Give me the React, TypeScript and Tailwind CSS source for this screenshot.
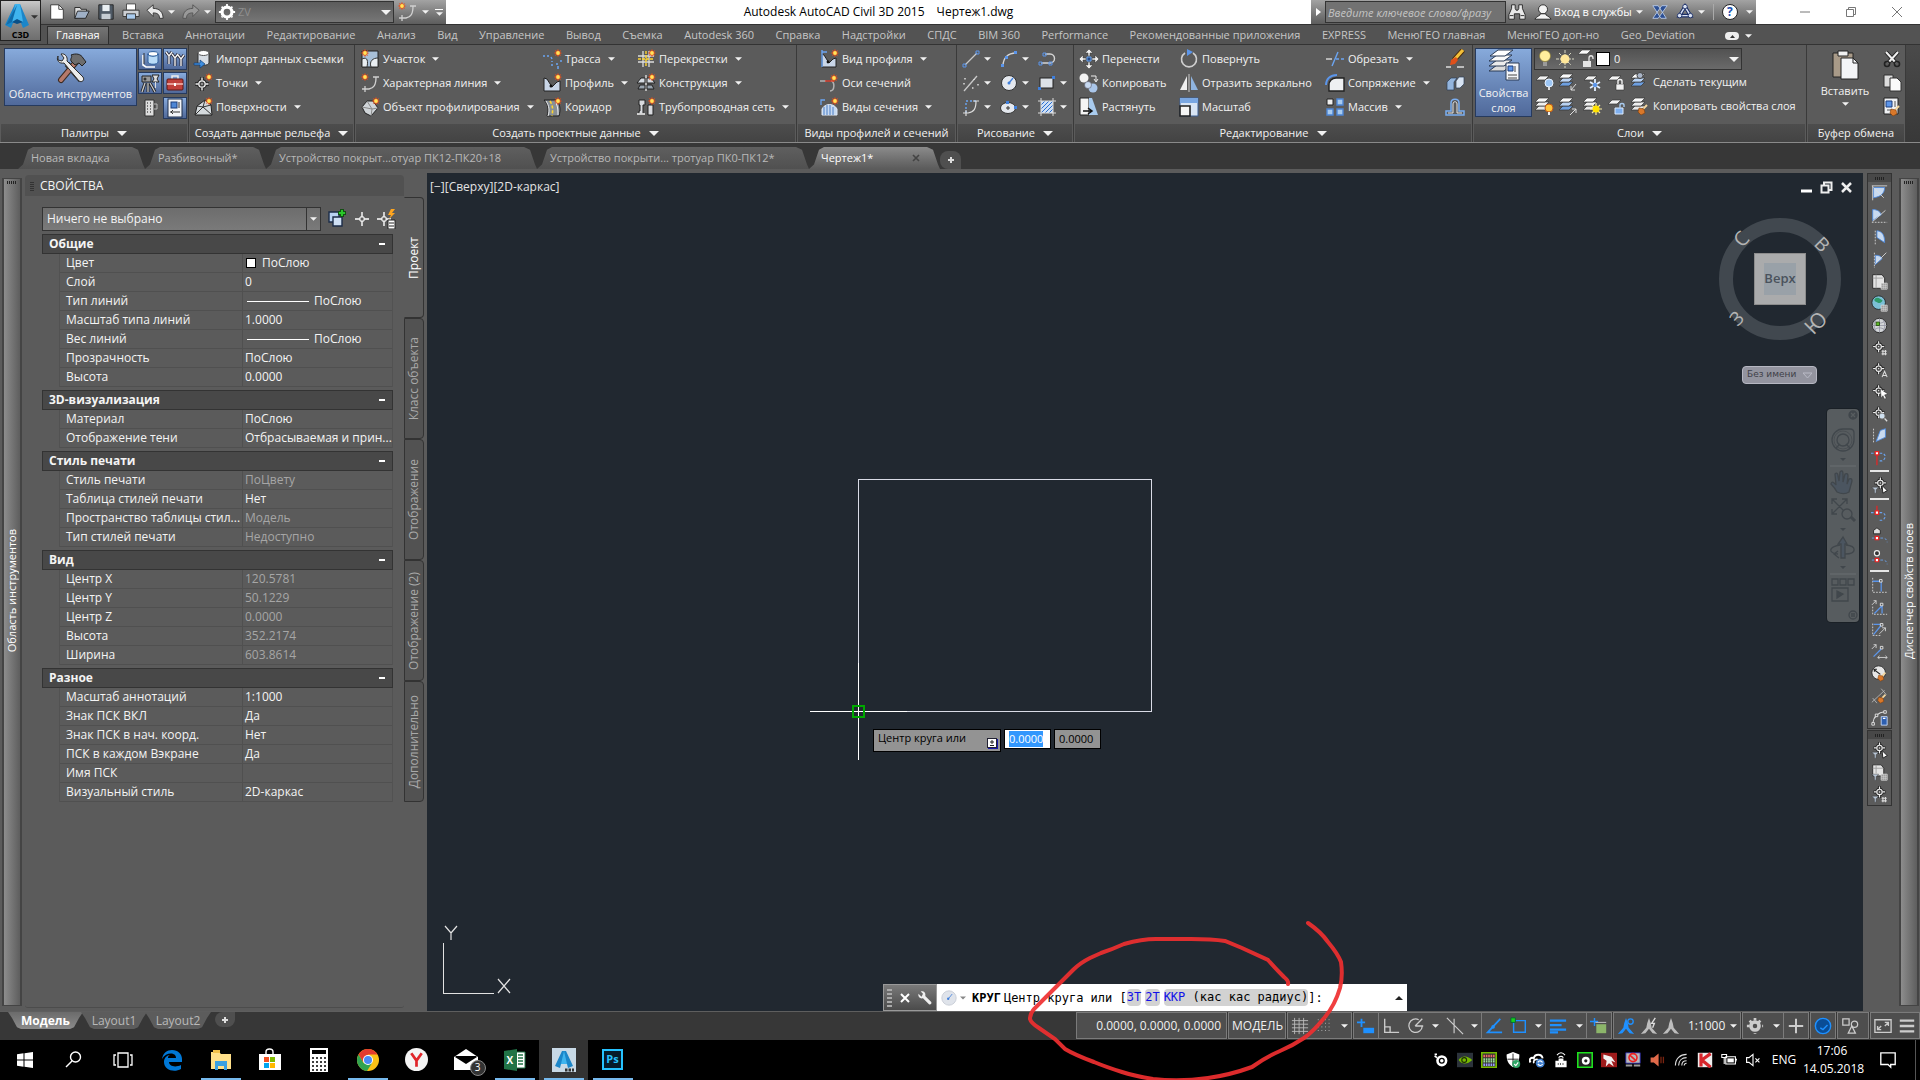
import type { ReactNode } from 'react';

type Kids = { children?: ReactNode };

function Svg({ s = 20, vb = 20, children }: Kids & { s?: number; vb?: number }) {
  return (
    <svg width={s} height={s} viewBox={`0 0 ${vb} ${vb}`} fill="none" className="shrink-0" aria-hidden="true">
      {children}
    </svg>
  );
}

function Caret({ big = false }: { big?: boolean }) {
  return (
    <svg width={big ? 10 : 7} height={big ? 5 : 4} viewBox="0 0 8 4" className="shrink-0" aria-hidden="true">
      <path d="M0 0h8L4 4z" fill="#f2f2f2" />
    </svg>
  );
}

// yellow/red burst that marks every "create" command
function Burst({ x = 16, y = 4 }: { x?: number; y?: number }) {
  return (
    <g transform={`translate(${x} ${y})`}>
      <path d="M0-4.2 1-1.8 3.2-3 2-.8 4.2 0 2 1 3.2 3 1 2 0 4.2-1 2-3.2 3-2 1-4.2 0-2-1-3.2-3-1-2z" fill="#e8501a" />
      <circle r="1.9" fill="#ffe45c" />
    </g>
  );
}

function Target({ x = 10, y = 10, c = '#f0f0f0' }: { x?: number; y?: number; c?: string }) {
  return (
    <g transform={`translate(${x} ${y})`}>
      <path d="M0-7v14M-7 0h14" stroke="#222" strokeWidth="3.4" />
      <circle r="3.6" fill="#3a3a3a" stroke="#222" strokeWidth="3" />
      <path d="M0-6.5v3M0 3.5v3M-6.5 0h3M3.5 0h3" stroke={c} strokeWidth="1.4" />
      <circle r="3.2" fill="#444" stroke={c} strokeWidth="1.3" />
      <circle r=".8" fill={c} />
    </g>
  );
}

function Layers({ blue = false }: { blue?: boolean }) {
  return (
    <g stroke="#333" strokeWidth=".7">
      <path d="M5 10h10l-4 4H1z" fill={blue ? '#6d9fe0' : '#e8e8e8'} />
      <path d="M5 6h10l-4 4H1z" fill={blue ? '#b9d2f2' : '#efefef'} />
      <path d="M5 2h10l-4 4H1z" fill="#fafafa" />
    </g>
  );
}

function Sheet() {
  return <path d="M6 4h9l-4 4H2z" fill="#f2f2f2" stroke="#333" strokeWidth=".7" />;
}

function Brush() {
  return (
    <g>
      <path d="m17 9-4 4" stroke="#f4d7a0" strokeWidth="2" />
      <path d="m9 12 5 1 1 4-4 2-3-3z" fill="#d9782a" stroke="#7a3d0c" strokeWidth=".6" />
    </g>
  );
}

/* ---------- ribbon pictures ---------- */

const ic = {
  tools: (
    <Svg s={34} vb={34}>
      <path d="m13 13 14 16" stroke="#2b2b2b" strokeWidth="6" />
      <path d="m22 11-15 18" stroke="#3a2a22" strokeWidth="6" strokeLinecap="round" />
      <path d="m22 11-15 18" stroke="#b5796a" strokeWidth="4" strokeLinecap="round" />
      <path d="M17 4c5-2 10-1 12 3l3 4-4 4-3-3-4 2-4-4c-1-3 2-4 0-6z" fill="#6d6d6d" stroke="#222" />
      <path d="M4 5c-2 4 1 8 6 7l15 18c3 2 6-1 4-4L13 10c1-4-2-8-6-7l3 4-2 3-4-1z" fill="#ececec" stroke="#2b2b2b" />
    </Svg>
  ),
  toolspace: (
    <Svg>
      <ellipse cx="13" cy="5" rx="5" ry="2.4" fill="#fff" stroke="#2c5d9b" />
      <path d="M8 5v8c0 3 10 3 10 0V5c0 3-10 3-10 0z" fill="#b9dbf7" stroke="#2c5d9b" />
      <path d="M3 6v10l3 2h9" stroke="#fff" strokeWidth="1.6" />
      <path d="M4 4v11" stroke="#333" strokeWidth="1" />
    </Svg>
  ),
  survey: (
    <Svg>
      <path d="m1 3 3 4v8M7 3 4 7M7 5l3 4v8m3-12-3 4m3-3 3 4v7m3-11-3 4" stroke="#223" strokeWidth="3" />
      <path d="m1 3 3 4v8M7 3 4 7M7 5l3 4v8m3-12-3 4m3-3 3 4v7m3-11-3 4" stroke="#f2f2f2" strokeWidth="1.4" />
    </Svg>
  ),
  tripod: (
    <Svg>
      <path d="M5 10 2 19M8 10v9M10 10l5 9" stroke="#222" strokeWidth="3" />
      <path d="M5 10 2 19M8 10v9M10 10l5 9" stroke="#c9c9c9" strokeWidth="1.300" />
      <path d="M2 3h9v6H2z" fill="#9a9a9a" stroke="#222" />
      <circle cx="5" cy="6" r="1.500" fill="#333" />
      <path d="M12 2h7l-2 4 2 3h-7l2-3z" fill="#ddd" stroke="#222" />
      <path d="M15.500 9v6" stroke="#ddd" />
    </Svg>
  ),
  toolbox: (
    <Svg>
      <path d="M7 6V3h6v3" stroke="#eee" strokeWidth="1.5" />
      <rect x="2" y="6" width="16" height="11" rx="1" fill="#c0403b" stroke="#5b1614" />
      <path d="M2 11h16" stroke="#f1b5b0" strokeWidth="1.6" />
      <path d="M9 10h2v3H9z" fill="#fff" />
    </Svg>
  ),
  building: (
    <Svg>
      <path d="M5 2h9v16H5z" fill="#ddd" stroke="#333" />
      <path d="M7 5h1m2 0h1M7 8h1m2 0h1M7 11h1m2 0h1M7 14h1m2 0h1" stroke="#555" strokeWidth="1.6" />
      <path d="M14 6h3v5h-3" stroke="#bbb" />
    </Svg>
  ),
  propPal: (
    <Svg>
      <rect x="3" y="1" width="14" height="18" fill="#f2f4f8" stroke="#1c2c48" />
      <rect x="6" y="4" width="6" height="6" fill="#4d86d6" stroke="#1c3c7a" />
      <path d="M14 4v6M5 14h10M8 12l-2 2 2 2" stroke="#333" />
    </Svg>
  ),
  importData: (
    <Svg>
      <path d="M5 4v10c0 3 11 3 11 0V4z" fill="#d7dde4" stroke="#333" />
      <ellipse cx="10.500" cy="4" rx="5.500" ry="2.500" fill="#fff" stroke="#555" />
      <path d="M1 14h6v-3l5 4-5 4v-3H1z" fill="#3f8fe0" stroke="#123e73" strokeWidth=".7" />
    </Svg>
  ),
  points: <Svg><Target x={9} y={11} /><Burst /></Svg>,
  surfaces: (
    <Svg>
      <path d="m2 18 2-9 8-6 6 5 1 10z" fill="#d4d9dc" stroke="#222" />
      <path d="m2 18 8-8 9 8M10 10 4 9m6 1 2-7m-2 7 8-2" stroke="#333" />
      <Burst />
    </Svg>
  ),
  parcel: (
    <Svg>
      <path d="M2 2h16v16H2z" fill="#a7bfd8" stroke="#222" />
      <path d="M2 10c6-3 6 3 5 8H2zM11 18c-2-6 2-9 7-9v9z" fill="#e9eef2" stroke="#333" />
      <Burst x={5} y={4} />
    </Svg>
  ),
  featureLine: (
    <Svg>
      <path d="M2 16h7c5-1 7-4 7-12M5 13v6M13 4h6" stroke="#d0d0d0" strokeWidth="1.3" />
      <Burst x={5} y={4} />
    </Svg>
  ),
  grading: (
    <Svg>
      <path d="m2 10 5-6h6l5 7-7 8-6-3z" fill="#cfd4d8" stroke="#222" />
      <path d="m2 10 10 2m-5-8 5 8-1 7m1-7 6-1" stroke="#888" />
      <Burst />
    </Svg>
  ),
  alignment: (
    <Svg>
      <path d="M1 7h2m2 0h2m2 1 1 2m0 2v1m0 2v2m4-2h2m2-3h2m-4 5v3" stroke="#6ba5f2" strokeWidth="1.5" />
      <Burst />
    </Svg>
  ),
  profile: (
    <Svg>
      <path d="M2 5v13h16V8l-3 1-5 5-5-8z" fill="#c9d6e8" stroke="#222" />
      <circle cx="9" cy="13" r="1.5" fill="#111" />
      <Burst />
    </Svg>
  ),
  corridor: (
    <Svg>
      <path d="M2 3c4 4 5 9 3 16h12c2-7 1-12-3-16z" fill="#888f96" stroke="#222" />
      <path d="M8 4c3 5 3 9 2 15" stroke="#ffd52e" strokeWidth="1.6" strokeDasharray="3 2" />
      <path d="M4 4c3 5 4 9 2 15M14 6c2 4 2 8 2 12" stroke="#eee" />
      <Burst />
    </Svg>
  ),
  intersection: (
    <Svg>
      <path d="M7 2v16M13 2v16M2 7h16M2 13h16" stroke="#ddd" strokeWidth="1.3" />
      <path d="M8 8h4v4H8z" fill="#777" />
      <path d="M2 10h16M10 2v16" stroke="#ffd52e" strokeWidth="1.400" strokeDasharray="3 1" />
      <Burst />
    </Svg>
  ),
  assembly: (
    <Svg>
      <path d="M10 2v16" stroke="#ddd" strokeWidth="1.4" />
      <path d="M5 5h4v5H1zM11 5h4l4 5h-8z" fill="#d5dbe2" stroke="#222" />
      <path d="M4 12h5v4H2zM11 12h5l2 4h-7z" fill="#98a3ae" stroke="#222" />
      <Burst />
    </Svg>
  ),
  pipes: (
    <Svg>
      <path d="M3 3h6v5H7v9H3v-3h1V8H3zM12 8h5v10h-5z" fill="#d8dade" stroke="#222" />
      <path d="M1 17h8" stroke="#eee" strokeWidth="1.6" />
      <Burst />
    </Svg>
  ),
  profileView: (
    <Svg>
      <path d="M3 5v13h14V9l-3 1-4 4-5-8z" fill="#c9d6e8" stroke="#222" />
      <path d="M3 1v17M3 3h5" stroke="#6ba5f2" strokeWidth="1.4" />
      <circle cx="9" cy="13" r="1.4" fill="#111" />
      <Burst />
    </Svg>
  ),
  sampleLines: (
    <Svg>
      <path d="M1 8h6M12 8c4 0 4 10-1 10" stroke="#b3b3b3" strokeWidth="1.5" />
      <path d="M6 8h9" stroke="#dd3b2a" strokeWidth="1.4" />
      <Burst x={15} y={5} />
    </Svg>
  ),
  sectionViews: (
    <Svg>
      <path d="M3 18v-6c3-6 12-6 15 0v6z" fill="#c7daf2" stroke="#dfe9f6" />
      <path d="M5 18v-8m3 8V8m3 10V8m3 10v-8" stroke="#4d7fc4" />
      <path d="M2 8V3h4" stroke="#6ba5f2" strokeWidth="1.300" />
      <Burst />
    </Svg>
  ),
  line: (
    <Svg>
      <path d="M4 16 16 4" stroke="#c9c9c9" strokeWidth="1.3" />
      <path d="M2 15h3v3H2zM15 2h3v3h-3z" stroke="#5b95ea" />
    </Svg>
  ),
  arc: (
    <Svg>
      <path d="M4 17C4 9 9 4 17 4" stroke="#d5d5d5" strokeWidth="1.4" />
      <path d="M2 15h3v3H2zM15 2h3v3h-3zM6 7h3v3H6z" fill="#5b95ea" />
    </Svg>
  ),
  polyline: (
    <Svg>
      <path d="M8 5h5c6 0 6 9 0 9H4" stroke="#d5d5d5" strokeWidth="1.4" />
      <path d="M6 4h3v3H6zM2 13h3v3H2zM12 13h3v3h-3z" stroke="#5b95ea" />
    </Svg>
  ),
  curves: (
    <Svg>
      <path d="M3 18 16 3" stroke="#c9c9c9" strokeWidth="1.3" />
      <path d="M4 5v2m-1 3v2m8 3h2m4-4v2m-4-7v1" stroke="#ddd" strokeWidth="1.5" strokeDasharray="1.500 1.500" />
    </Svg>
  ),
  circle: (
    <Svg>
      <circle cx="10" cy="10" r="7.500" fill="#e4e8ee" stroke="#333" />
      <path d="m10 10 4-5" stroke="#3f7fdc" strokeWidth="1.3" />
      <circle cx="10" cy="10" r="1.5" fill="#3f7fdc" />
    </Svg>
  ),
  rect: (
    <Svg>
      <rect x="3" y="5" width="13" height="10" fill="#dde2e8" stroke="#222" />
      <path d="M15 3h3v3h-3zM1 14h3v3H1z" fill="#3f7fdc" />
    </Svg>
  ),
  spline: (
    <Svg>
      <path d="M5 16V4h10" stroke="#6ba5f2" strokeWidth="1.4" strokeDasharray="2 2" />
      <path d="M5 13v6M2 16h5c6-1 8-4 8-12M12 4h6" stroke="#ddd" strokeWidth="1.200" />
    </Svg>
  ),
  ellipse: (
    <Svg>
      <ellipse cx="9" cy="11" rx="7.500" ry="5.500" fill="#e4e8ee" stroke="#333" />
      <path d="M9 9v4M7 11h4" stroke="#333" />
      <path d="M7 4h3v3H7zM15 9h3v3h-3z" fill="#3f7fdc" />
    </Svg>
  ),
  hatch: (
    <Svg>
      <rect x="4" y="4" width="12" height="12" fill="#cfe0f5" />
      <path d="m4 8 4-4M4 12l8-8M4 16 16 4M8 16l8-8m-4 8 4-4" stroke="#2b6fd0" />
      <path d="M4 1v18M16 1v18M1 4h18M1 16h18" stroke="#ddd" />
    </Svg>
  ),
  move: (
    <Svg>
      <path d="M10 0 6 4h3v3h2V4h3zM10 20l-4-4h3v-3h2v3h3zM0 10l4-4v3h3v2H4v3zM20 10l-4-4v3h-3v2h3v3z" fill="#eee" stroke="#333" strokeWidth=".5" />
      <path d="M8 8h4v4H8z" fill="#254a86" stroke="#6ba5f2" />
    </Svg>
  ),
  copy: (
    <Svg>
      <circle cx="5" cy="5" r="4.500" fill="#f2f2f2" />
      <circle cx="14" cy="15" r="4.500" fill="#aac6ea" />
      <circle cx="9" cy="12" r="3.500" fill="#c6d8ef" stroke="#556" strokeWidth=".6" />
      <path d="M12 3h5v5m-2-2 2 3 2-3" stroke="#eee" />
    </Svg>
  ),
  stretch: (
    <Svg>
      <path d="M1 1h9v17H1z" fill="#f4f4f4" stroke="#222" />
      <path d="M10 1h3l6 17h-9z" fill="#a9cbee" />
      <path d="M4 14h8m-3-3 4 3-4 3" stroke="#111" strokeWidth="1.5" />
    </Svg>
  ),
  rotate: (
    <Svg>
      <path d="M6 4a7.500 7.500 0 1 0 8 0" stroke="#cfcfcf" strokeWidth="1.6" />
      <path d="M8 0v7l6-4z" fill="#5b95ea" />
    </Svg>
  ),
  mirror: (
    <Svg>
      <path d="M8 3v14H1z" fill="#f0f0f0" />
      <path d="M12 3v14h7z" fill="#8fb4e0" />
      <path d="M10 1v18" stroke="#ccc" />
    </Svg>
  ),
  scale: (
    <Svg>
      <path d="M1 1h18v18H1z" fill="#d9e5f4" stroke="#3c5f93" />
      <path d="M1 1h18v5H1z" fill="#7aa7e2" />
      <path d="M1 9h10v10H1z" fill="#f5f5f5" stroke="#222" strokeWidth="1.6" />
    </Svg>
  ),
  trim: (
    <Svg>
      <path d="M1 10h6" stroke="#ddd" strokeWidth="1.4" />
      <path d="M11 10h8" stroke="#6ba5f2" strokeWidth="1.4" strokeDasharray="3 2" />
      <path d="m7 17 6-14" stroke="#6ba5f2" strokeWidth="1.4" />
    </Svg>
  ),
  fillet: (
    <Svg>
      <path d="M4 18V12c0-4 3-7 7-7h8v13z" fill="#eef0f2" stroke="#222" strokeWidth="1.4" />
      <path d="M1 12C1 6 5 2 12 2" stroke="#5b95ea" strokeWidth="1.8" />
    </Svg>
  ),
  array: (
    <Svg>
      <path d="M2 2h6v6H2z" fill="#eee" stroke="#222" />
      <path d="M12 2h6v6h-6zM2 12h6v6H2zM12 12h6v6h-6z" fill="#a9cbee" stroke="#4d86d6" strokeWidth="1.4" />
    </Svg>
  ),
  erase: (
    <Svg>
      <path d="m18 1-9 10" stroke="#4a2a0a" strokeWidth="5" />
      <path d="m18 1-9 10" stroke="#f3c03a" strokeWidth="3.200" />
      <path d="m11 8-5 3-1 5 5-1 3-4z" fill="#e0501a" />
      <path d="M1 18h5m6 0h7" stroke="#ddd" strokeWidth="1.300" />
    </Svg>
  ),
  explode: (
    <Svg>
      <path d="m2 9 4-4h6l-3 4v8H2z" fill="#93b5de" stroke="#2c3e58" strokeWidth=".7" />
      <path d="m11 8 3-4h5v7l-4 4h-4z" fill="#d7e3f2" stroke="#2c3e58" strokeWidth=".7" />
    </Svg>
  ),
  offset: (
    <Svg>
      <path d="M1 18v-4h5V6c0-5 8-5 8 0v8h5v4z" stroke="#7aaef2" strokeWidth="1.5" />
      <path d="M3 16h5V7c0-3 4-3 4 0v9h5" stroke="#e6e6e6" />
    </Svg>
  ),
  layerProps: (
    <Svg s={32} vb={32}>
      <g stroke="#2a3a55">
        <path d="M9 16h15l-8 6H1z" fill="#dcdcdc" />
        <path d="M9 11h15l-8 6H1z" fill="#ececec" />
        <path d="M9 6h15l-8 6H1z" fill="#fafafa" />
        <path d="M10 1h15l-8 6H2z" fill="#fff" />
        <path d="M18 14h13v17H18z" fill="#f4f6f9" />
      </g>
      <path d="M20 17h5v5h-5z" fill="#5b95ea" stroke="#1c3c7a" />
      <path d="M27 17v6M20 26h9M20 29h9" stroke="#444" />
    </Svg>
  ),
  bulb: (
    <Svg>
      <circle cx="10" cy="7" r="5.500" fill="#ffee9c" stroke="#8a7a2a" strokeWidth=".6" />
      <path d="M8 13h4v4H8z" fill="#9a9a9a" />
    </Svg>
  ),
  sun: (
    <Svg>
      <path d="M10 1v18M1 10h18M4 4l12 12M16 4 4 16" stroke="#d9d9c4" strokeDasharray="3 1" />
      <circle cx="10" cy="10" r="4.500" fill="#ffe79a" />
    </Svg>
  ),
  unlockSheet: (
    <Svg>
      <path d="M7 1h9l-4 4H3z" fill="#fafafa" stroke="#333" strokeWidth=".6" />
      <path d="M8 12h8v6H8z" fill="#e4e4e4" />
      <path d="M14 12V9c0-3 4-3 4 0v1" stroke="#e4e4e4" strokeWidth="1.300" />
    </Svg>
  ),
  layOff: (
    <Svg><Sheet /><circle cx="15" cy="11" r="4" fill="#9cc6f5" stroke="#e8f2ff" /><path d="M14 15h2v3h-2z" fill="#ddd" /></Svg>
  ),
  layIso: <Svg><Layers blue /><path d="m18 12-5 6m0-4v4h4" stroke="#ddd" /></Svg>,
  layFreeze: (
    <Svg><Sheet /><path d="M13 7v12M8 10l10 6M18 10 8 16" stroke="#e4f0ff" strokeWidth="1.8" /><circle cx="13" cy="13" r="2.200" fill="#5b95ea" /></Svg>
  ),
  layLock: (
    <Svg><Sheet /><path d="M10 12h8v6h-8z" fill="#f2f2f2" stroke="#333" strokeWidth=".6" /><path d="M12 12V9c0-2 4-2 4 0v3" stroke="#f2f2f2" strokeWidth="1.4" /></Svg>
  ),
  makeCurrent: <Svg><Layers blue /><circle cx="10" cy="3.500" r="3" fill="#a9b4c6" stroke="#444" /></Svg>,
  layOn: <Svg><Layers /><circle cx="15" cy="12" r="4" fill="#ffc63c" stroke="#c0581a" /><path d="M14 16h2v3h-2z" fill="#eee" /></Svg>,
  layUniso: <Svg><Layers blue /><path d="m12 19 6-6m-4 0h4v4" stroke="#ddd" /></Svg>,
  layThaw: (
    <Svg><Layers /><path d="M14 7v12M8 13h12M10 9l8 8m0-8-8 8" stroke="#fff0a0" strokeWidth="1.2" /><circle cx="14" cy="13" r="3.500" fill="#ffe100" /></Svg>
  ),
  layUnlock: (
    <Svg><Sheet /><path d="M9 12h8v6H9z" fill="#7fb0ef" stroke="#dcebff" /><path d="M14 12V9c0-2 4-2 4 0v2" stroke="#a9cbee" strokeWidth="1.4" /></Svg>
  ),
  matchLayer: <Svg><Layers /><Brush /></Svg>,
  paste: (
    <Svg s={32} vb={32}>
      <path d="M4 4h20v24H4z" fill="#a89a88" stroke="#222" />
      <path d="M9 2h10v5H9z" fill="#f0f0f0" stroke="#222" />
      <path d="M12 9h12l5 5v16H12z" fill="#f3f4f6" stroke="#222" />
      <path d="M24 9v5h5" stroke="#222" />
    </Svg>
  ),
  cut: (
    <Svg>
      <path d="m4 3 10 11M16 3 6 14" stroke="#222" strokeWidth="4" />
      <path d="m4 3 10 11M16 3 6 14" stroke="#f0f0f0" strokeWidth="2" />
      <circle cx="5" cy="15" r="2.500" stroke="#222" strokeWidth="1.6" />
      <circle cx="15" cy="15" r="2.500" stroke="#222" strokeWidth="1.6" />
    </Svg>
  ),
  copyClip: (
    <Svg>
      <path d="M2 2h9v12H2z" fill="#ddd" stroke="#333" />
      <path d="M8 5h7l4 4v9H8z" fill="#fafafa" stroke="#333" />
    </Svg>
  ),
  matchProps: (
    <Svg>
      <path d="M2 1h14v16H2z" fill="#f0f2f5" stroke="#222" />
      <path d="M4 4h6v6H4z" fill="#5b95ea" stroke="#1c3c7a" />
      <path d="M13 4v6M5 13h5" stroke="#555" />
      <Brush />
    </Svg>
  ),
};

function RibbonButton({ icon, label, caret = false }: { icon: ReactNode; label: string; caret?: boolean }) {
  return (
    <button className="flex h-6 items-center gap-[3px] whitespace-nowrap text-left">
      {icon}
      {label}
      {caret && <span className="ml-1"><Caret /></span>}
    </button>
  );
}

function Panel({ title, width, caret = false, children }: Kids & { title: string; width: string; caret?: boolean }) {
  return (
    <section className={`flex shrink-0 flex-col border-r border-[#3a3a3a] ${width}`}>
      <div className="flex h-[79px] pt-[2px]">{children}</div>
      <h2 className="mx-px flex h-[18px] items-center justify-center gap-2 whitespace-nowrap bg-linear-to-b from-[#4d4d4d] to-[#434343]">
        {title}
        {caret && <Caret big />}
      </h2>
    </section>
  );
}

const on = 'border border-[#263a5e] bg-linear-to-b from-[#87aadb] to-[#50699a]';

const menu = [
  'Главная', 'Вставка', 'Аннотации', 'Редактирование', 'Анализ', 'Вид', 'Управление', 'Вывод', 'Съемка',
  'Autodesk 360', 'Справка', 'Надстройки', 'СПДС', 'BIM 360', 'Performance', 'Рекомендованные приложения',
  'EXPRESS', 'МенюГЕО главная', 'МенюГЕО доп-но', 'Geo_Deviation',
];

function TitleBar() {
  return (
    <header className="flex h-6 bg-white text-black">
      <div className="relative w-10 shrink-0">
        <button
          aria-label="Меню приложения"
          className="absolute left-0 top-0 z-10 flex h-[41px] w-[41px] flex-col items-center border border-[#222] bg-linear-to-b from-[#c9c9c9] via-[#8c8c8c] to-[#6e6e6e] pt-[2px]"
        >
          <span className="flex items-center">
            <Svg s={28} vb={28}>
              <path d="M12 1h5l9 21-6 3-2-5h-8l-2 5-6-3z" fill="#1b86c9" />
              <path d="M12 1h5l3 18H9z" fill="#3fb4ee" />
              <path d="M14 2 3 22l6-3z" fill="#0f6cab" />
              <path d="m9 19 5-3 6 3-6 2z" fill="#0b4f86" />
            </Svg>
            <svg width="7" height="4" viewBox="0 0 8 4" aria-hidden="true"><path d="M0 0h8L4 4z" fill="#333" /></svg>
          </span>
          <span className="text-[9px] font-bold leading-[8px]">C3D</span>
        </button>
      </div>
      <div className="flex w-[406px] shrink-0 items-center bg-linear-to-b from-[#a3a3a3] to-[#5d5d5d] pl-2 text-white">
        <div className="flex w-[167px] items-center justify-between pr-1">
          <button aria-label="Создать"><Svg s={18}><path d="M3 2h9l5 5v11H3z" fill="#fff" stroke="#333" /><path d="M12 2v5h5" stroke="#333" /></Svg></button>
          <button aria-label="Открыть"><Svg s={18}><path d="M2 5h6l1 2h6v3L4 17H2z" fill="#ddd" stroke="#222" /><path d="M5 9h13l-4 8H2z" fill="#9fb0c6" stroke="#222" /></Svg></button>
          <button aria-label="Сохранить"><Svg s={18}><path d="M2 2h16v16H2z" fill="#4f5a66" stroke="#222" /><path d="M6 2h8v7H6z" fill="#e9eef2" /><path d="M5 12h10v6H5z" fill="#c5ccd3" /></Svg></button>
          <button aria-label="Печать"><Svg s={18}><path d="M5 1h10v7H5z" fill="#fff" stroke="#444" /><path d="M1 8h18v7H1z" fill="#cdd0d4" stroke="#333" /><path d="M5 12h10v6H5z" fill="#a9cbee" stroke="#333" /></Svg></button>
          <button aria-label="Отменить" className="flex items-center gap-1"><Svg s={18}><path d="M1 8 8 2v4c7 0 11 4 11 11h-4c0-4-2-6-7-6v4z" fill="#e9e9e9" stroke="#333" /></Svg><Caret /></button>
          <button aria-label="Повторить" className="flex items-center gap-1"><Svg s={18}><path d="m19 8-7-6v4C5 6 1 10 1 17h4c0-4 2-6 7-6v4z" fill="#999" stroke="#555" /></Svg><Caret /></button>
        </div>
        <div className="flex h-[22px] w-[179px] items-center border border-[#333] bg-linear-to-b from-[#5c5c5c] to-[#767676] px-[2px]">
          <Svg s={18}><circle cx="10" cy="10" r="5.500" stroke="#fff" strokeWidth="3.500" /><path d="M10 1v18M1 10h18M4 4l12 12M16 4 4 16" stroke="#fff" strokeWidth="2" strokeDasharray="3.500 12" /></Svg>
          <select aria-label="Рабочее пространство" className="min-w-0 flex-1 appearance-none bg-transparent pl-[2px] text-[#8f8f8f] outline-none"><option>ZV</option></select>
          <Caret big />
        </div>
        <div className="flex flex-1 items-center justify-around">
          <button aria-label="Характерная линия">{ic.featureLine}</button>
          <Caret />
          <button aria-label="Настройка панели" className="flex flex-col items-center gap-[2px]"><span className="h-px w-2 bg-white" /><Caret /></button>
        </div>
      </div>
      <h1 className="flex flex-1 items-center justify-center gap-3 whitespace-nowrap text-[12px]">
        <span>Autodesk AutoCAD Civil 3D 2015</span>
        <span>Чертеж1.dwg</span>
      </h1>
      <div className="flex w-[445px] shrink-0 items-center bg-linear-to-b from-[#a3a3a3] to-[#5d5d5d] text-[12px] text-white">
        <span className="flex w-[14px] justify-center"><svg width="5" height="8" viewBox="0 0 5 8" aria-hidden="true"><path d="M0 0v8l5-4z" fill="#fff" /></svg></span>
        <input aria-label="Поиск" placeholder="Введите ключевое слово/фразу" className="h-[22px] w-[181px] border border-[#333] bg-[#727272] px-[2px] text-[11px] italic outline-none placeholder:text-[#c4c4c4]" />
        <div className="flex flex-1 items-center justify-between pl-[2px] pr-[3px]">
          <button aria-label="Найти"><Svg s={18}><path d="M4 2h4v4l1 2h2l1-2V2h4v4l3 7v5h-6v-6H7v6H1v-5l3-7z" fill="#e8e8e8" stroke="#222" /><path d="M2 14h4m8 0h4" stroke="#222" /></Svg></button>
          <button className="flex items-center gap-[2px] whitespace-nowrap text-[11px]">
            <Svg s={18}><circle cx="10" cy="7" r="5" fill="#f4f4f4" stroke="#222" /><path d="M1 18c2-4 6-3 6-6h6c0 3 4 2 6 6z" fill="#f4f4f4" stroke="#222" /></Svg>
            Вход в службы <span className="ml-[2px]"><Caret /></span>
          </button>
          <button aria-label="Exchange"><Svg s={18}><path d="M2 3h6l9 14h-6zM18 3h-6L2 17h6z" fill="#2c4f93" stroke="#b9cbe8" /></Svg></button>
          <button aria-label="A360" className="flex items-center gap-1"><Svg s={18}><path d="m10 4-6 10h12z" stroke="#1d2f66" strokeWidth="4" /><path d="m10 4-6 10h12z" stroke="#dbe4f4" strokeWidth="1.6" /><circle cx="10" cy="4" r="2.500" fill="#dbe4f4" stroke="#1d2f66" /><circle cx="4" cy="14" r="2.500" fill="#dbe4f4" stroke="#1d2f66" /><circle cx="16" cy="14" r="2.500" fill="#dbe4f4" stroke="#1d2f66" /></Svg><Caret /></button>
          <span className="h-4 w-px bg-[#aaa]" />
          <button aria-label="Справка" className="flex items-center gap-2"><span className="flex h-4 w-4 items-center justify-center rounded-full border border-[#222] bg-white text-[12px] font-bold text-[#1c4fb0]">?</span><Caret /></button>
        </div>
      </div>
      <div className="flex w-[164px] shrink-0 items-center justify-end">
        <button aria-label="Свернуть" className="flex w-[46px] justify-center"><Svg s={12} vb={12}><path d="M1 6h10" stroke="#777" /></Svg></button>
        <button aria-label="Развернуть" className="flex w-[46px] justify-center"><Svg s={12} vb={12}><path d="M1.500 3.500h7v7h-7zM3.500 3V1.500h7v7H9" stroke="#777" /></Svg></button>
        <button aria-label="Закрыть" className="flex w-[46px] justify-center"><Svg s={12} vb={12}><path d="m1 1 10 10M11 1 1 11" stroke="#777" /></Svg></button>
      </div>
    </header>
  );
}

function Ribbon() {
  return (
    <div className="bg-[#5b5b5b] text-[#f2f2f2]">
      <nav className="flex h-[21px] items-end border-b border-t border-[#333] bg-[#535353] pl-[47px]">
        <ul className="flex w-[1648px] items-end justify-between whitespace-nowrap text-[#c6c6c6]">
          {menu.map((m, i) => (
            <li key={m} className={i === 0 ? '-mr-2' : ''}>
              <a
                href="#"
                className={
                  i === 0
                    ? 'flex h-[18px] items-center border border-b-0 border-[#2e2e2e] bg-linear-to-b from-[#757575] to-[#5b5b5b] px-2 text-white'
                    : 'flex h-[18px] items-center'
                }
              >
                {m}
              </a>
            </li>
          ))}
        </ul>
        <button aria-label="Свернуть ленту" className="mb-1 ml-[30px] flex items-center gap-[6px]">
          <span className="flex h-2 w-[14px] items-center justify-center rounded-sm bg-[#eee]"><svg width="5" height="3" viewBox="0 0 5 3" aria-hidden="true"><path d="M0 3h5L2.500 0z" fill="#333" /></svg></span>
          <Caret />
        </button>
      </nav>
      <div className="flex border-b border-[#8a8a8a] bg-[#5b5b5b]">
        <Panel title="Палитры" width="w-[189px]" caret>
          <button className={`ml-1 mt-px flex h-[58px] w-[133px] flex-col items-center justify-between pb-1 pt-[2px] ${on}`}>
            {ic.tools}
            <span className="leading-[14px]">Область инструментов</span>
          </button>
          <div className="ml-px grid h-[72px] grid-cols-2 gap-x-px gap-y-[2px] pt-px">
            {[ic.toolspace, ic.survey, ic.tripod, ic.toolbox, ic.building, ic.propPal].map((p, i) => (
              <button key={i} className={`flex h-[22px] w-6 items-center justify-center ${i === 4 ? '' : on}`}>{p}</button>
            ))}
          </div>
        </Panel>
        <Panel title="Создать данные рельефа" width="w-[166px]" caret>
          <div className="pl-1">
            <RibbonButton icon={ic.importData} label="Импорт данных съемки" />
            <RibbonButton icon={ic.points} label="Точки" caret />
            <RibbonButton icon={ic.surfaces} label="Поверхности" caret />
          </div>
        </Panel>
        <Panel title="Создать проектные данные" width="w-[442px]" caret>
          <div className="ml-[5px] w-[182px]">
            <RibbonButton icon={ic.parcel} label="Участок" caret />
            <RibbonButton icon={ic.featureLine} label="Характерная линия" caret />
            <RibbonButton icon={ic.grading} label="Объект профилирования" caret />
          </div>
          <div className="w-[94px]">
            <RibbonButton icon={ic.alignment} label="Трасса" caret />
            <RibbonButton icon={ic.profile} label="Профиль" caret />
            <RibbonButton icon={ic.corridor} label="Коридор" />
          </div>
          <div>
            <RibbonButton icon={ic.intersection} label="Перекрестки" caret />
            <RibbonButton icon={ic.assembly} label="Конструкция" caret />
            <RibbonButton icon={ic.pipes} label="Трубопроводная сеть" caret />
          </div>
        </Panel>
        <Panel title="Виды профилей и сечений" width="w-[160px]">
          <div className="ml-[22px]">
            <RibbonButton icon={ic.profileView} label="Вид профиля" caret />
            <RibbonButton icon={ic.sampleLines} label="Оси сечений" />
            <RibbonButton icon={ic.sectionViews} label="Виды сечения" caret />
          </div>
        </Panel>
        <Panel title="Рисование" width="w-[117px]" caret>
          <div className="ml-1 grid h-[72px] grid-cols-3 gap-x-2">
            {[ic.line, ic.arc, ic.polyline, ic.curves, ic.circle, ic.rect, ic.spline, ic.ellipse, ic.hatch].map((p, i) => (
              <button key={i} className="flex h-6 items-center gap-[3px]">
                {p}
                {i !== 2 && <Caret />}
              </button>
            ))}
          </div>
        </Panel>
        <Panel title="Редактирование" width="w-[399px]" caret>
          <div className="ml-[5px] w-[100px]">
            <RibbonButton icon={ic.move} label="Перенести" />
            <RibbonButton icon={ic.copy} label="Копировать" />
            <RibbonButton icon={ic.stretch} label="Растянуть" />
          </div>
          <div className="w-[146px]">
            <RibbonButton icon={ic.rotate} label="Повернуть" />
            <RibbonButton icon={ic.mirror} label="Отразить зеркально" />
            <RibbonButton icon={ic.scale} label="Масштаб" />
          </div>
          <div className="w-[120px]">
            <RibbonButton icon={ic.trim} label="Обрезать" caret />
            <RibbonButton icon={ic.fillet} label="Сопряжение" caret />
            <RibbonButton icon={ic.array} label="Массив" caret />
          </div>
          <div>
            <button aria-label="Стереть" className="flex h-6 items-center">{ic.erase}</button>
            <button aria-label="Расчленить" className="flex h-6 items-center">{ic.explode}</button>
            <button aria-label="Подобие" className="flex h-6 items-center">{ic.offset}</button>
          </div>
        </Panel>
        <Panel title="Слои" width="w-[334px]" caret>
          <button className={`ml-[2px] mt-px flex h-[69px] w-[57px] flex-col items-center ${on}`}>
            {ic.layerProps}
            <span className="mt-1 leading-[15px]">Свойства слоя</span>
          </button>
          <div className="ml-[2px]">
            <div className="mt-px flex h-[22px] w-[208px] items-center border border-[#333] bg-linear-to-b from-[#525252] to-[#6a6a6a] pr-[2px]">
              {ic.bulb}{ic.sun}{ic.unlockSheet}
              <span className="ml-px h-[14px] w-[14px] shrink-0 border border-black bg-white" />
              <select aria-label="Слой" className="min-w-0 flex-1 appearance-none bg-transparent pl-1 outline-none"><option>0</option></select>
              <Caret big />
            </div>
            <div className="flex h-6 items-center gap-1">{ic.layOff}{ic.layIso}{ic.layFreeze}{ic.layLock}<RibbonButton icon={ic.makeCurrent} label="Сделать текущим" /></div>
            <div className="flex h-6 items-center gap-1">{ic.layOn}{ic.layUniso}{ic.layThaw}{ic.layUnlock}<RibbonButton icon={ic.matchLayer} label="Копировать свойства слоя" /></div>
          </div>
        </Panel>
        <Panel title="Буфер обмена" width="w-[99px]">
          <button className="ml-[13px] flex w-[50px] flex-col items-center pt-[2px]">
            {ic.paste}
            <span className="mb-1 mt-[3px] leading-[14px]">Вставить</span>
            <Caret />
          </button>
          <div className="ml-3">
            <button aria-label="Вырезать" className="flex h-6 items-center">{ic.cut}</button>
            <button aria-label="Копировать" className="flex h-6 items-center">{ic.copyClip}</button>
            <button aria-label="Свойства" className="flex h-6 items-center">{ic.matchProps}</button>
          </div>
        </Panel>
        <div className="flex-1 bg-linear-to-b from-[#4a4a4a] to-[#383838]" />
      </div>
    </div>
  );
}

const tabShape = '[clip-path:polygon(0_100%,5px_80%,10px_12%,15px_0,calc(100%-13px)_0,calc(100%-7px)_12%,calc(100%-2px)_80%,100%_100%)]';

const files = [
  { name: 'Новая вкладка', w: 'w-[127px]' },
  { name: 'Разбивочный*', w: 'w-[121px]' },
  { name: 'Устройство покрыт...отуар ПК12-ПК20+18', w: 'w-[271px]' },
  { name: 'Устройство покрыти... тротуар ПК0-ПК12*', w: 'w-[272px]' },
];

function FileTabs() {
  return (
    <div className="bg-[#373737] pt-1">
      <div className="flex h-[22px] items-end pl-[18px] text-[#b9b9b9]">
        {files.map(f => (
          <a key={f.name} href="#" className={`flex h-[22px] items-center whitespace-nowrap bg-linear-to-b from-[#5f5f5f] to-[#505050] pl-[13px] ${f.w} ${tabShape}`}>
            {f.name}
          </a>
        ))}
        <a href="#" className={`flex h-[22px] w-[131px] items-center justify-between bg-linear-to-b from-[#8b8b8b] to-[#5b5b5b] pl-[12px] pr-5 text-white ${tabShape}`}>
          Чертеж1*
          <Svg s={8} vb={8}><path d="m1 1 6 6M7 1 1 7" stroke="#444" strokeWidth="1.6" /></Svg>
        </a>
        <button aria-label="Новый чертеж" className="flex h-[18px] w-[21px] items-center justify-center rounded-t-lg rounded-bl-lg bg-[#4f4f4f]">
          <Svg s={8} vb={8}><path d="M4 1v6M1 4h6" stroke="#ddd" strokeWidth="2" /></Svg>
        </button>
      </div>
      <div className="h-1 bg-[#5b5b5b]" />
    </div>
  );
}

type Row = { k: string; v: string; dim?: boolean; mark?: 'box' | 'line' };

const groups: { name: string; rows: Row[] }[] = [
  {
    name: 'Общие',
    rows: [
      { k: 'Цвет', v: 'ПоСлою', mark: 'box' },
      { k: 'Слой', v: '0' },
      { k: 'Тип линий', v: 'ПоСлою', mark: 'line' },
      { k: 'Масштаб типа линий', v: '1.0000' },
      { k: 'Вес линий', v: 'ПоСлою', mark: 'line' },
      { k: 'Прозрачность', v: 'ПоСлою' },
      { k: 'Высота', v: '0.0000' },
    ],
  },
  {
    name: '3D-визуализация',
    rows: [{ k: 'Материал', v: 'ПоСлою' }, { k: 'Отображение тени', v: 'Отбрасываемая и прин...' }],
  },
  {
    name: 'Стиль печати',
    rows: [
      { k: 'Стиль печати', v: 'ПоЦвету', dim: true },
      { k: 'Таблица стилей печати', v: 'Нет' },
      { k: 'Пространство таблицы стил...', v: 'Модель', dim: true },
      { k: 'Тип стилей печати', v: 'Недоступно', dim: true },
    ],
  },
  {
    name: 'Вид',
    rows: [
      { k: 'Центр X', v: '120.5781', dim: true },
      { k: 'Центр Y', v: '50.1229', dim: true },
      { k: 'Центр Z', v: '0.0000', dim: true },
      { k: 'Высота', v: '352.2174', dim: true },
      { k: 'Ширина', v: '603.8614', dim: true },
    ],
  },
  {
    name: 'Разное',
    rows: [
      { k: 'Масштаб аннотаций', v: '1:1000' },
      { k: 'Знак ПСК ВКЛ', v: 'Да' },
      { k: 'Знак ПСК в нач. коорд.', v: 'Нет' },
      { k: 'ПСК в каждом Вэкране', v: 'Да' },
      { k: 'Имя ПСК', v: '' },
      { k: 'Визуальный стиль', v: '2D-каркас' },
    ],
  },
];

function Grip() {
  return <span className="h-[3px] w-[10px] shrink-0 bg-[repeating-linear-gradient(90deg,#222_0_1px,transparent_1px_2px)]" />;
}

function SideStrip({ label, pos }: { label: string; pos: string }) {
  return (
    <div className="mb-[5px] mt-[5px] flex w-5 shrink-0 flex-col items-center border-2 border-y border-[#444] bg-linear-to-r from-[#8d8d8d] to-[#5e5e5e] pt-[2px] text-white">
      <Grip />
      <span className={`whitespace-nowrap text-[11px] leading-[16px] [writing-mode:vertical-rl] rotate-180 ${pos}`}>{label}</span>
    </div>
  );
}

function Properties() {
  return (
    <aside className="flex shrink-0 bg-[#5b5b5b] pl-[2px] text-[12px] text-[#f4f4f4]">
      <SideStrip label="Область инструментов" pos="mt-[345px]" />
      <div className="flex w-[382px] flex-col pl-[3px]">
        <h2 className="mt-[2px] flex h-[21px] items-center gap-[6px] rounded-t bg-[#515151] pl-[5px]">
          <span className="h-[10px] w-1 bg-[repeating-linear-gradient(0deg,#333_0_1px,transparent_1px_2px)]" />
          СВОЙСТВА
        </h2>
        <div className="ml-[17px] mr-[11px]">
          <div className="mb-[3px] mt-[11px] flex h-6 items-center">
            <div className="flex h-6 w-[279px] items-center border border-[#333] bg-linear-to-b from-[#6d6d6d] to-[#7a7a7a]">
              <select aria-label="Выбор" className="h-full min-w-0 flex-1 appearance-none bg-transparent pl-1 outline-none"><option>Ничего не выбрано</option></select>
              <span className="flex h-full w-[14px] items-center justify-center border-l border-[#333]"><Caret /></span>
            </div>
            <div className="-mr-[3px] flex flex-1 justify-between pl-[6px]">
              <button aria-label="Переключить выбор"><Svg><path d="M2 3h10v10H2z" fill="#b9d2f2" stroke="#1c2c48" strokeWidth="1.4" /><path d="M6 8h9v9H6z" fill="#cfe0f5" stroke="#1c2c48" strokeWidth="1.4" /><path d="M15 0v8M11 4h8" stroke="#124f12" strokeWidth="4" /><path d="M15 1v6M12 4h6" stroke="#28c828" strokeWidth="2" /></Svg></button>
              <button aria-label="Выбрать объекты"><Svg><path d="M10 3v14M3 10h14" stroke="#fff" strokeWidth="1.4" /><path d="M8 8h4v4H8z" fill="#5b5b5b" stroke="#fff" /></Svg></button>
              <button aria-label="Быстрый выбор"><Svg><path d="M8 3v14M1 10h14" stroke="#fff" strokeWidth="1.4" /><path d="M6 8h4v4H6z" fill="#5b5b5b" stroke="#fff" /><path d="m15 0-3 6h3l-2 4 6-6h-3l3-4z" fill="#ffa51e" /><path d="M12 11h7v9h-7z" fill="#fff" stroke="#222" /><path d="M13 14h5m-5 3h5" stroke="#222" /></Svg></button>
            </div>
          </div>
          {groups.map(g => (
            <section key={g.name} className="mb-[3px]">
              <h3 className="flex h-5 items-center justify-between border border-[#333] bg-[#484848] pl-[6px] pr-[7px] font-bold">
                {g.name}
                <button aria-label={`Свернуть ${g.name}`} className="h-[2px] w-[6px] bg-white" />
              </h3>
              <table className="ml-[17px] w-[334px] table-fixed border-separate border-spacing-0 border-x border-[#525252] leading-[18px]">
                <tbody>
                  {g.rows.map(r => (
                    <tr key={r.k}>
                      <th scope="row" className="h-[19px] w-[182px] whitespace-nowrap border-b border-[#505050] p-0 pl-[6px] text-left font-normal">{r.k}</th>
                      <td className={`h-[19px] whitespace-nowrap border-b border-l border-[#505050] p-0 pl-[2px] ${r.dim ? 'text-[#a6a6a6]' : ''}`}>
                        <span className="flex h-[18px] items-center">
                          {r.mark === 'box' && <span className="ml-px mr-[6px] h-[10px] w-[10px] border border-black bg-white" />}
                          {r.mark === 'line' && <span className="ml-[2px] mr-[5px] h-px w-[62px] bg-white" />}
                          {r.v}
                        </span>
                      </td>
                    </tr>
                  ))}
                </tbody>
              </table>
            </section>
          ))}
        </div>
        <div className="mb-[3px] mt-auto h-[3px] rounded-b border-b border-[#4c4c4c]" />
      </div>
      <div className="mr-[3px] mt-6 w-5">
        {['Проект', 'Класс объекта', 'Отображение', 'Отображение (2)', 'Дополнительно'].map((t, i) => (
          <button
            key={t}
            className={`flex h-[121px] w-5 items-center justify-center rounded-r border border-[#333] text-[12px] ${
              i === 0 ? 'border-l-transparent bg-[#5b5b5b] text-white' : 'bg-[#525252] text-[#a9a9a9]'
            }`}
          >
            <span className="whitespace-nowrap [writing-mode:vertical-rl] rotate-180">{t}</span>
          </button>
        ))}
      </div>
    </aside>
  );
}

function NavBar() {
  return (
    <div className="absolute right-1 top-[236px] flex h-[213px] w-8 flex-col items-center rounded bg-[#575c5f] text-[#41474c] ring-1 ring-[#1a2026]">
      <svg width="32" height="213" viewBox="0 0 32 213" fill="none" stroke="currentColor" strokeWidth="1.3" aria-hidden="true">
        <circle cx="26" cy="6" r="4" fill="#41474c" /><path d="m24 4 4 4m0-4-4 4" stroke="#575c5f" />
        <path d="M16 20h7q4 0 4 4v7a11 11 0 1 1-11-11z" /><circle cx="16" cy="31" r="6" /><circle cx="16" cy="31" r="9" strokeWidth=".6" /><path d="m9 39 4-4m10 4-4-4" />
        <path d="M13 49h6l-3 3z" fill="#41474c" stroke="none" /><path d="M3 57h26" stroke="#666b6e" />
        <path d="M10 83c-2-4-4-6-6-8 1-3 3-2 5 1l-1-11c2-2 3 0 3 2l1 5 1-9c2-2 3-1 3 2v8l2-8c2-1 3 0 3 2l-1 8 2-5c2-1 3 0 3 2l-3 11c-3 2-8 2-12 0z" fill="#4b5560" />
        <path d="m5 90 15 15M20 90 5 105M5 95v-5h5m5 0h5v5M5 100v5h5" /><circle cx="20" cy="105" r="5" fill="#575c5f" /><path d="m24 108 4 4" strokeWidth="3" />
        <path d="M13 119h6l-3 3z" fill="#41474c" stroke="none" />
        <path d="M14 149v-14h-3l5-7 4 7h-2v14z" fill="#4b5560" /><path d="M13 136c-12 2-12 8-2 9m8-9c11 1 11 9-1 9M11 142l-4 3 5 4" />
        <path d="M13 157h6l-3 3z" fill="#41474c" stroke="none" /><path d="M3 165h26" stroke="#666b6e" />
        <path d="M5 170h6v6H5zM13 170h6v6h-6zM21 170h6v6h-6zM5 179h16v13H5z" /><path d="m10 182 6 3-6 4z" fill="#41474c" />
        <circle cx="26" cy="206" r="4" /><path d="M24 205h4m-4 2h4" />
      </svg>
    </div>
  );
}

function Canvas() {
  return (
    <main className="relative min-w-0 flex-1 overflow-hidden bg-[#212830]">
      <p className="absolute left-[3px] top-[6px] text-[12px] leading-4 text-[#e4e4e4]">[−][Сверху][2D-каркас]</p>
      <div className="absolute right-[10px] top-[8px] flex gap-[7px]">
        <button aria-label="Свернуть вид"><Svg s={13} vb={13}><path d="M1 10h11" stroke="#fff" strokeWidth="3" /></Svg></button>
        <button aria-label="Восстановить вид"><Svg s={13} vb={13}><path d="M1.500 4.500h7v7h-7zM4 4V1.500h7.500V9H9" stroke="#eee" strokeWidth="2" /></Svg></button>
        <button aria-label="Закрыть вид"><Svg s={13} vb={13}><path d="m2 2 9 9M11 2l-9 9" stroke="#eee" strokeWidth="2.500" /></Svg></button>
      </div>

      <div className="absolute right-[22px] top-[45px] flex h-[122px] w-[122px] items-center justify-center rounded-full border-[14px] border-[#41484f] text-[#b4b4b4]">
        <button className="flex h-[52px] w-[52px] items-center justify-center border border-[#8c8c8c] bg-[#aaabac]">
          <span className="flex h-8 w-8 items-center justify-center bg-[#99a1a8] text-[13px] font-semibold text-[#4a525c]">Верх</span>
        </button>
        <span className="absolute left-[2px] top-[-8px] rotate-[-45deg] text-[20px]">С</span>
        <span className="absolute right-[-1px] top-[-2px] rotate-45 text-[19px]">В</span>
        <span className="absolute bottom-[-6px] left-[-2px] rotate-[-45deg] text-[19px]">З</span>
        <span className="absolute bottom-[-12px] right-0 rotate-[-45deg] text-[21px]">Ю</span>
      </div>
      <button className="absolute right-[46px] top-[193px] flex h-[18px] w-[75px] items-center justify-between rounded border border-[#b6b7c2] bg-[#93949f] pl-1 pr-1 font-[DejaVu_Sans,sans-serif] text-[9px] text-[#3e4048]">
        Без имени
        <Svg s={9} vb={9}><path d="M0 2h9L4.500 7z" stroke="#b9bac6" /></Svg>
      </button>
      <NavBar />

      <svg width="360" height="300" className="absolute left-[380px] top-[300px]" fill="none" shapeRendering="crispEdges" aria-hidden="true">
        <path d="M51.500 6.500h293v232h-293z" stroke="#d9dbe6" />
        <path d="M3 238.500h97M51.500 190v97" stroke="#fff" />
        <path d="M46 233h11v11H46z" stroke="#00a800" strokeWidth="2" />
      </svg>
      <div className="absolute left-[446px] top-[556px] flex items-start gap-[3px] text-[11px] text-black">
        <div className="flex h-[23px] w-32 items-center justify-between border border-black bg-[#939393] pl-1 pr-[3px]">
          <span className="pb-1">Центр круга или</span>
          <span className="mt-1 flex h-[10px] w-[10px] items-center justify-center border border-[#223] bg-white shadow-[1px_1px_0_#1a1aaa]"><Svg s={6} vb={6}><path d="M3 0v4M1 2h4M1 5.500h4" stroke="#222" /></Svg></span>
        </div>
        <div className="h-5 w-[47px] border border-black bg-white py-px pl-1">
          <input aria-label="X" defaultValue="0.0000" className="block h-4 w-[34px] bg-[#3297fd] text-white outline-none" />
        </div>
        <div className="h-5 w-[47px] border border-black bg-[#939393] py-px pl-1">
          <input aria-label="Y" defaultValue="0.0000" className="block h-4 w-[38px] bg-transparent outline-none" />
        </div>
      </div>

      <svg width="90" height="90" className="absolute bottom-px left-[10px]" fill="none" stroke="#e2e2e2" aria-hidden="true">
        <path d="M6.500 23v50.500H57" shapeRendering="crispEdges" />
        <path d="m8 6 6 7 6-7M14 13v7M61 59l12 14M73 59 61 73" strokeWidth="1.2" />
      </svg>

      <div className="absolute bottom-0 left-1/2 flex h-[27px] w-[524px] -translate-x-1/2 items-center bg-white font-[DejaVu_Sans_Mono,monospace] text-[12px] text-black">
        <div className="flex h-full w-[54px] shrink-0 items-center justify-between border border-[#999] bg-linear-to-b from-[#7a7a7a] to-[#4b4b4b] pl-[3px] pr-1">
          <span className="h-[18px] w-[5px] bg-[repeating-linear-gradient(0deg,#aaa_0_2px,transparent_2px_4px)]" />
          <button aria-label="Закрыть"><Svg s={10} vb={10}><path d="m1 1 8 8M9 1 1 9" stroke="#fff" strokeWidth="2" /></Svg></button>
          <button aria-label="Адаптация"><Svg s={15}><path d="M2 5c-1 4 2 7 6 6l8 8c2 1 4-1 3-3l-8-8c1-4-2-7-6-6l3 3-2 4z" fill="#eee" /></Svg></button>
        </div>
        <span className="ml-1 flex items-center gap-[3px]">
          <Svg s={16}><circle cx="10" cy="10" r="9" fill="#dfe3ea" stroke="#c3c8d2" /><circle cx="9" cy="11" r="1.500" fill="#3f7fdc" /><path d="m10 10 4-5" stroke="#3f7fdc" /></Svg>
          <svg width="6" height="4" viewBox="0 0 8 4" aria-hidden="true"><path d="M0 0h8L4 4z" fill="#888" /></svg>
        </span>
        <p className="ml-[6px] flex items-center whitespace-pre">
          <b>КРУГ</b>
          <span className="ml-[3px]">Центр круга или [</span>
        </p>
        <button className="h-[17px] rounded-sm bg-[#d2d2d2] leading-[17px] text-[#1111e8]">3Т</button>
        <button className="ml-1 h-[17px] rounded-sm bg-[#d2d2d2] leading-[17px] text-[#1111e8]">2Т</button>
        <button className="ml-1 h-[17px] whitespace-nowrap rounded-sm bg-[#d2d2d2] leading-[17px]"><span className="text-[#1111e8]">ККР</span> (кас кас радиус)</button>
        <span>]:</span>
        <svg width="8" height="4" viewBox="0 0 8 4" className="ml-auto mr-1" aria-hidden="true"><path d="M0 4h8L4 0z" fill="#222" /></svg>
      </div>
    </main>
  );
}

/* ---------- transparent command / inquiry toolbar ---------- */

const dash = { stroke: '#dcdcdc', strokeDasharray: '2 1.5' };

function Tri({ d }: { d: string }) {
  return <path d={d} fill="#c8daf0" stroke="#4d8ae0" />;
}

function Funnel() {
  return <path d="M1 12h8l-3 3v4H4v-4z" fill="#b9c6d6" stroke="#333" strokeWidth=".5" />;
}

function GridMark() {
  return <path d="M12 12h7v7h-7zM14.300 12v7M16.600 12v7M12 14.300h7M12 16.600h7" fill="#555" stroke="#eee" strokeWidth=".9" />;
}

function Hash() {
  return <path d="M14 13v6m3-6v6m-4.500-4.500h6m-6 3h6" stroke="#ddd" strokeWidth="1.2" />;
}

function Elbow({ up = false }: { up?: boolean }) {
  return (
    <>
      <path d={up ? 'M7 1v9' : 'M7 4v15'} stroke="#e22" strokeWidth="1.4" />
      <path d="M0 5h12c6 0 6 7 1 9h-3" stroke="#6ba5f2" strokeWidth="1.3" strokeDasharray="3 2" transform={up ? 'translate(0 4)' : undefined} />
      <path d={up ? 'M5 7h4v4H5z' : 'M5 3h4v4H5z'} fill="#fff" stroke="#e22" strokeWidth="1.4" />
    </>
  );
}

const bar: (ReactNode | null)[] = [
  <><Tri d="M3 3h13c0 7-5 11-13 12z" /><path d="M1 1h18M2 1v17M3 3l12 12" stroke="#ddd" /></>,
  <><Tri d="M2 3c6 0 9 3 10 6l-10 7z" /><path d="M2 17 17 4" stroke="#ddd" /><path d="M1 18h18" {...dash} /></>,
  <><Tri d="M7 2c7 1 9 6 9 14L7 10z" /><path d="M5 2v17" {...dash} /></>,
  <><Tri d="M5 5c4 0 7 1 8 4l-8 7z" /><path d="M18 2 5 15" stroke="#ddd" /><path d="M4 2v18" {...dash} /></>,
  <><path d="M2 2h11l3 4v12H2z" fill="#e4e4e4" stroke="#222" /><path d="M6 2v16M2 6h12" stroke="#999" /><GridMark /></>,
  <><circle cx="9" cy="9" r="8" fill="#7cc0d6" stroke="#222" /><path d="M4 5c4-4 7 0 9 1s-3 5-5 3-4 0-4-4z" fill="#2f9a6a" /><GridMark /></>,
  <><circle cx="10" cy="10" r="8.500" fill="#d3d6d8" stroke="#222" /><path d="M10 2v16M2 10h16M4 5c4 3 8 3 12 0M4 15c4-3 8-3 12 0M6 3c-3 5-3 9 0 14M14 3c3 5 3 9 0 14" stroke="#889" strokeWidth=".8" /><path d="M6 6h4v4H6z" fill="#5db82a" stroke="#234c0c" /></>,
  <><Target x={9} y={9} /><Hash /></>,
  <><Target x={9} y={9} /><path d="m13 19 3-7 3 7m-5-2h4" stroke="#ddd" strokeWidth="1.2" /></>,
  <><Target x={9} y={9} /><path d="m11 7 1 11 2-3 2 4 2-1-2-4 4-1z" fill="#fff" stroke="#222" strokeWidth=".6" /></>,
  <><Target x={9} y={9} /><circle cx="13" cy="13" r="3.500" fill="#cfe0f0" stroke="#777" /><path d="m16 16 3 3" stroke="#ddd" strokeWidth="1.6" /></>,
  <><Tri d="M17 2v10L6 17l5-13z" /><path d="M3 2v17" {...dash} /></>,
  <Elbow />,
  null,
  <><Target x={11} y={7} /><Funnel /><path d="m13 10 1 9 5-3z" fill="#fff" stroke="#111" /></>,
  null,
  <Elbow up />,
  <><path d="M3 8V4l4-3 4 3v4z" fill="#ddd" stroke="#222" /><path d="M1 13h12c4 0 6 2 6 5" stroke="#6ba5f2" strokeDasharray="3 2" /><path d="M5 11h4v4H5z" fill="#fff" stroke="#e22" strokeWidth="1.4" /></>,
  <><circle cx="7" cy="5" r="3" fill="#333" stroke="#eee" strokeWidth="1.4" /><path d="M1 13h12c4 0 6 2 6 5" stroke="#6ba5f2" strokeDasharray="3 2" /><path d="M5 11h4v4H5z" fill="#fff" stroke="#e22" strokeWidth="1.4" /></>,
  null,
  <><path d="M2 1v17h17" {...dash} /><path d="M2 5h10v12" stroke="#5b95ea" strokeWidth="1.5" /><path d="M10 3h3v3h-3z" fill="#555" stroke="#eee" /></>,
  <><path d="m1 7 5-5v4m0-4H3" stroke="#ddd" /><path d="M2 9v9h17" {...dash} /><path d="m4 17 9-9v9" stroke="#5b95ea" strokeWidth="1.5" /><path d="M11 5h3v3h-3z" fill="#555" stroke="#eee" /></>,
  <><path d="M2 3v14h10" {...dash} /><path d="M12 4H3m0 12L12 5" stroke="#5b95ea" strokeWidth="1.5" /><path d="m10 15 7-7v4m0-4h-4" stroke="#ddd" /><path d="M11 3h3v3h-3z" fill="#555" stroke="#eee" /></>,
  <><path d="m1 7 5-5v4m0-4H3" stroke="#ddd" /><path d="m3 16 9-9" stroke="#5b95ea" strokeWidth="1.5" /><path d="M8 17h11m-9-2-2 2 2 2m7-4 2 2-2 2" stroke="#ddd" /><path d="M11 4h3v3h-3z" fill="#555" stroke="#eee" /></>,
  <><circle cx="9" cy="9" r="8" fill="#e6e6e6" stroke="#222" /><path d="m3 5 8 6M4 8V5h3" stroke="#222" strokeWidth="1.3" /><Brush /></>,
  <><path d="m2 13 5 6M1 18l15-14m-4-2 6 7" stroke="#bbb" /><Brush /></>,
  <><path d="M2 17C3 9 8 4 17 3" stroke="#ddd" strokeWidth="1.3" /><path d="M1 16h3v3H1zM5 6h3v3H5zM15 2h3v3h-3z" fill="#555" stroke="#eee" /><path d="M12 9h7v10h-7z" fill="#2d5fb0" stroke="#cfe0ff" /><path d="M14 11h3" stroke="#fff" strokeWidth="1.500" /></>,
];

const bar2: ReactNode[] = [
  <><Target x={10} y={7} /><Funnel /><path d="m13 10 1 9 5-3z" fill="#fff" stroke="#111" /></>,
  <><path d="M2 1h10l3 4v9H2z" fill="#e4e4e4" stroke="#222" /><path d="M6 1v10M2 5h12" stroke="#999" /><Funnel /><GridMark /></>,
  <><Target x={10} y={7} /><Funnel /><Hash /></>,
];

function RightTools() {
  return (
    <div className="flex shrink-0 bg-[#5b5b5b] pl-1 pr-px text-[12px]">
      <div className="mr-[7px] w-[25px]">
        {[bar, bar2].map((icons, n) => (
          <div key={n} className="mb-px flex flex-col items-center border border-[#333] bg-[#5b5b5b]">
            <div className="flex h-2 w-full items-center justify-center bg-[#484848]"><Grip /></div>
            {icons.map((icon, i) =>
              icon === null ? (
                <hr key={i} className="my-[2px] h-[2px] w-[19px] border-0 bg-[#e6e6e6]" />
              ) : (
                <button key={i} className="flex h-[22px] w-[22px] items-center justify-center"><Svg s={17}>{icon}</Svg></button>
              ),
            )}
          </div>
        ))}
      </div>
      <SideStrip label="Диспетчер свойств слоев" pos="mt-[339px]" />
    </div>
  );
}

/* ---------- status bar ---------- */

function Cell({ w, children }: Kids & { w: string }) {
  return <div className={`flex h-full items-center justify-between border-l border-[#7b7b7b] px-[3px] first:border-l-0 ${w}`}>{children}</div>;
}

function Group({ children }: Kids) {
  return <div className="flex h-[27px] border border-[#7b7b7b] bg-[#4e4e4e]">{children}</div>;
}

function Person({ c }: { c: string }) {
  return <path d="M10 1 8 7l-1 5-6 7 5-1 4-5 4 5 5 1-6-7-1-5z" fill={c} />;
}

const blue = '#1e90ff';
const foot = '[clip-path:polygon(0_0,100%_0,calc(100%-4px)_35%,calc(100%-9px)_90%,calc(100%-13px)_100%,13px_100%,9px_90%,4px_35%)]';

function StatusBar() {
  return (
    <div className="flex h-[29px] items-start border-t border-[#5e5e5e] bg-[#373737] text-[12px] text-[#f0f0f0]">
      <div className="ml-2 flex h-[17px] text-[#b9b9b9]">
        <button className={`w-[75px] bg-linear-to-b from-[#6b6b6b] to-[#8b8b8b] font-bold leading-4 text-white ${foot}`}>Модель</button>
        <button className={`-ml-[2px] w-[66px] bg-[#5c5c5c] leading-4 ${foot}`}>Layout1</button>
        <button className={`-ml-[2px] w-[66px] bg-[#5c5c5c] leading-4 ${foot}`}>Layout2</button>
        <button aria-label="Новый лист" className="ml-1 flex h-[15px] w-5 items-center justify-center rounded-b-lg rounded-tl-lg bg-[#4f4f4f]"><Svg s={8} vb={8}><path d="M4 1v6M1 4h6" stroke="#ddd" strokeWidth="2" /></Svg></button>
      </div>
      <div className="ml-auto flex shrink-0 gap-px">
        <Group><Cell w="w-[149px]"><span className="w-full pr-[2px] text-right">0.0000, 0.0000, 0.0000</span></Cell></Group>
        <Group><Cell w="w-[56px]"><span className="w-full text-center">МОДЕЛЬ</span></Cell></Group>
        <Group>
          <Cell w="w-[63px]">
            <Svg s={18}><path d="M4 1v18M9 1v18M14 1v18M1 4h18M1 8h18M1 12h18M1 16h18" stroke="#bbb" /></Svg>
            <Svg s={18}><path d="M2 3h16M2 7h16M2 11h16M2 15h16" stroke="#bbb" strokeDasharray="1 3" /></Svg>
            <Caret />
          </Cell>
        </Group>
        <Group>
          <Cell w="w-6"><Svg s={18}><path d="M5 2v9M0 6h9" stroke={blue} strokeWidth="2" /><path d="M7 12h12v6H7z" fill={blue} /></Svg></Cell>
          <Cell w="w-[103px]">
            <Svg s={18}><path d="M3 2v15h16M3 11h6v6" stroke="#ccc" strokeWidth="1.5" /></Svg>
            <Svg s={18}><path d="M17 10a7.500 7.500 0 1 1-4-7M9 10h9M9 10l8-8" stroke="#ccc" strokeWidth="1.4" /></Svg>
            <Caret />
            <Svg s={18}><path d="m1 1 18 18M9 2v16" stroke="#ccc" strokeWidth="1.3" /></Svg>
            <Caret />
          </Cell>
          <Cell w="w-16">
            <Svg s={18}><path d="M17 2 3 17h16" stroke={blue} strokeWidth="2" /><circle cx="9" cy="11" r="2" fill={blue} /></Svg>
            <Svg s={18}><path d="M4 4h13v13H4z" stroke={blue} strokeWidth="1.6" /><path d="M1 1h5v5H1z" fill="#19d219" stroke="#063" /></Svg>
            <Caret />
          </Cell>
          <Cell w="w-[41px]">
            <Svg s={18}><path d="M1 4h18M1 9h13M1 14h18M1 17h9" stroke={blue} strokeWidth="2.600" /></Svg>
            <Caret />
          </Cell>
          <Cell w="w-[25px]"><Svg s={18}><path d="M5 1v9M0 5h9" stroke={blue} strokeWidth="1.600" /><path d="M7 8h11v10H7z" fill="#8cb56a" /><path d="M6 6h12" stroke="#ccc" /></Svg></Cell>
        </Group>
        <Group>
          <Cell w="w-[126px]">
            <Svg s={18}><Person c={blue} /><circle cx="15" cy="5" r="3" stroke={blue} strokeWidth="1.500" /></Svg>
            <Svg s={18}><Person c="#bdbdbd" /><path d="m17 1-4 6h3l-2 5" stroke="#ddd" strokeWidth="1.500" /></Svg>
            <Svg s={18}><Person c="#bdbdbd" /></Svg>
            <span className="ml-[3px]">1:1000</span>
            <Caret />
          </Cell>
        </Group>
        <Group>
          <Cell w="w-10"><Svg s={18}><circle cx="10" cy="10" r="4.500" stroke="#ccc" strokeWidth="4" /><path d="M10 1v18M1 10h18M4 4l12 12M16 4 4 16" stroke="#ccc" strokeWidth="3" strokeDasharray="3 14" /></Svg><Caret /></Cell>
          <Cell w="w-[25px]"><Svg s={18}><path d="M10 2v16M2 10h16" stroke="#ccc" strokeWidth="2.200" /></Svg></Cell>
        </Group>
        <Group><Cell w="w-6"><Svg s={18}><circle cx="10" cy="10" r="8.500" fill="#0a4d96" stroke={blue} strokeWidth="1.600" /><path d="m7 12 3 2 5-5" stroke={blue} strokeWidth="1.600" /></Svg></Cell></Group>
        <Group><Cell w="w-[30px]"><Svg s={18}><path d="M2 2h7v7H2zM8 18l4-8 4 8z" stroke="#ccc" strokeWidth="1.400" /><circle cx="15" cy="8" r="3.500" stroke="#ccc" strokeWidth="1.400" /></Svg></Cell></Group>
        <Group>
          <Cell w="w-12">
            <Svg s={18}><path d="M1 3h18v14H1z" stroke="#ccc" strokeWidth="1.500" /><path d="m4 14 4-4m-4 0v4h4m8-8-4 4m4 0V6h-4" stroke="#ccc" strokeWidth="1.500" /></Svg>
            <Svg s={18}><path d="M2 4h16M2 10h16M2 16h16" stroke="#ccc" strokeWidth="2.600" /></Svg>
          </Cell>
        </Group>
      </div>
    </div>
  );
}

/* ---------- taskbar ---------- */

const apps: { name: string; state?: 'open' | 'active'; icon: ReactNode }[] = [
  { name: 'Пуск', icon: <Svg s={16} vb={16}><path d="M0 2.200 6.500 1.300V7.500H0zM7.500 1.200 16 0v7.500H7.500zM0 8.500h6.500v6.200L0 13.800zM7.500 8.500H16V16l-8.500-1.200z" fill="#fff" /></Svg> },
  { name: 'Поиск', icon: <Svg s={17} vb={17}><circle cx="10.500" cy="6" r="5" stroke="#fff" strokeWidth="1.400" /><path d="m7 10-6 6" stroke="#fff" strokeWidth="1.400" /></Svg> },
  { name: 'Представление задач', icon: <Svg s={20}><path d="M5 3h10v14H5zM3 5H1v10h2M17 5h2v10h-2" stroke="#fff" strokeWidth="1.300" /></Svg> },
  { name: 'Edge', icon: <Svg s={22} vb={22}><path d="M1 10C2 4 6 1 11 1c6 0 10 4 10 9v3H8c0 4 6 6 12 3v4c-7 4-17 1-17-7 0-4 3-7 6-7-2 1-2 2-2 3h8c0-6-10-6-14 1z" fill="#0078d7" /></Svg> },
  { name: 'Проводник', state: 'open', icon: <Svg s={22} vb={22}><path d="M1 3h8l2 2h10v15H1z" fill="#ffe08a" /><path d="M3 1h7v3H3z" fill="#f2c14a" /><path d="M5 12h12v9h-3v-4H8v4H5z" fill="#3aa0e0" /></Svg> },
  { name: 'Магазин', icon: <Svg s={24} vb={24}><path d="M8 7V4c0-4 7-4 7 0v3" stroke="#fff" strokeWidth="1.400" /><path d="M1 6h22v16H1z" fill="#fff" /><path d="M6 9h5v5H6z" fill="#f25022" /><path d="M12 9h5v5h-5z" fill="#7fba00" /><path d="M6 15h5v5H6z" fill="#00a4ef" /><path d="M12 15h5v5h-5z" fill="#ffb900" /></Svg> },
  { name: 'Калькулятор', icon: <Svg s={24} vb={24}><path d="M3 0h18v24H3z" fill="#fff" /><path d="M5 2h14v4H5z" fill="#000" /><path d="M5 10h14M5 14h14M5 18h14M5 22h14" stroke="#000" strokeWidth="1.600" strokeDasharray="2 2" /></Svg> },
  { name: 'Chrome', state: 'open', icon: <Svg s={22} vb={22}><circle cx="11" cy="11" r="11" fill="#fbc116" /><path d="M1.500 5.500A11 11 0 0 1 20.500 5.500H11L6 13z" fill="#e33b2e" /><path d="M1.500 5.500A11 11 0 0 0 10 22l5-8H6.500z" fill="#31a350" /><circle cx="11" cy="11" r="5" fill="#fff" /><circle cx="11" cy="11" r="4" fill="#4a8af4" /></Svg> },
  { name: 'Яндекс', icon: <Svg s={23} vb={22}><circle cx="11" cy="11" r="11" fill="#f4f4f4" /><path d="m6 5 5 7 5-7M11 12v6" stroke="#e0252a" strokeWidth="2.600" /></Svg> },
  { name: 'Почта', icon: <span className="relative"><Svg s={24} vb={24}><path d="m0 9 12-8 12 8v13H0z" fill="#fff" /><path d="m1 9 11 7 11-7-1-1H2z" fill="#000" /></Svg><span className="absolute -bottom-1 -right-2 flex h-4 w-4 items-center justify-center rounded-full border border-[#888] bg-[#333] text-[10px] text-white">3</span></span> },
  { name: 'Excel', state: 'open', icon: <span className="relative flex"><Svg s={22} vb={22}><path d="M12 3h9v16h-9z" fill="#fff" stroke="#217346" /><path d="M14 6h5m-5 3h5m-5 3h5m-5 3h5" stroke="#217346" strokeWidth="1.500" /><path d="m0 2 13-2v22L0 20z" fill="#217346" /></Svg><b className="absolute left-[3px] top-1 text-[10px] leading-[14px] text-white">X</b></span> },
  { name: 'Civil 3D', state: 'active', icon: <Svg s={24} vb={24}><path d="M0 0h24v24H0z" fill="#c8d9e6" /><path d="M10 3h4l7 15-5 2-1-4H9l-1 4-5-2z" fill="#1b86c9" /><path d="m12 3 3 13H9z" fill="#3fb4ee" /><path d="M13 22h9" stroke="#333" strokeWidth="3" strokeDasharray="2.500 1" /></Svg> },
  { name: 'Photoshop', state: 'open', icon: <span className="flex h-[21px] w-[21px] items-center justify-center border-2 border-[#26c2ff] bg-[#061c2a] text-[11px] font-bold text-[#26c2ff]">Ps</span> },
];

const tray: ReactNode[] = [
  <><circle cx="11" cy="11" r="7" fill="#fff" /><circle cx="11" cy="11" r="3" stroke="#000" strokeWidth="1.600" /><path d="M2 3h3M5 7 2 5" stroke="#fff" strokeWidth="2" /></>,
  <><path d="M0 1h20v18H0z" fill="#2c333b" /><path d="M2 10c4-6 11-6 17 0-6 6-13 6-17 0z" fill="#76b900" /><circle cx="9" cy="10" r="3" stroke="#1b2a08" strokeWidth="1.400" /></>,
  <><path d="M1 1h18v18H1z" fill="#333" stroke="#76b900" strokeWidth="2" /><path d="M3 5h14" stroke="#e66" strokeWidth="3" strokeDasharray="2 1" /><path d="M3 9h14M3 12h14" stroke="#9d9" strokeWidth="2.500" strokeDasharray="2 1" /><path d="M3 16h14" stroke="#99f" strokeWidth="3" strokeDasharray="2 1" /></>,
  <><path d="m10 0 8 3c0 8-2 12-8 16-6-4-8-8-8-16z" fill="#fff" /><path d="M10 2v15M3 9h14" stroke="#000" /><circle cx="14" cy="15" r="5" fill="#2fa566" /><path d="m11.500 15 2 2 3-4" stroke="#fff" strokeWidth="1.400" /></>,
  <><path d="M2 13c-3-4 1-7 4-5 1-6 10-6 11 0" stroke="#fff" strokeWidth="2.500" /><path d="M6 14c-1-4 3-6 6-4" stroke="#fff" strokeWidth="2" /><circle cx="14" cy="14" r="5.500" fill="#3f7fd0" /><path d="M11 13c2-3 4-2 6 0m0 2c-2 3-4 2-6 0" stroke="#fff" strokeWidth="1.400" /></>,
  <><path d="M3 11h14v8H3zM7 11V8h6v3" fill="#fff" /><path d="M5 4c3-4 7-4 10 0M7 7c2-2 4-2 6 0" stroke="#fff" strokeWidth="1.400" /><path d="M6 15h1m2 0h1m2 0h1" stroke="#000" strokeWidth="2" /></>,
  <><path d="M1 1h18v18H1z" fill="#222" stroke="#1de21d" strokeWidth="2" /><circle cx="11" cy="11" r="5" fill="#fff" /><circle cx="11" cy="11" r="2" fill="#222" /></>,
  <><path d="M0 1h20v18H0z" fill="#9e1b1b" /><path d="m3 3 10 3 5 7-5-2 3 7-6-4-4 4 1-7-4-3z" fill="#f2f2f2" /></>,
  <><path d="M1 1h18v13H1z" fill="#b9b9b9" stroke="#22a" /><circle cx="10" cy="7" r="5" stroke="#e22" strokeWidth="2" /><path d="m6 4 8 7" stroke="#e22" strokeWidth="2" /><path d="M1 17h8m2 0h8" stroke="#999" strokeWidth="2.500" /></>,
  <><path d="M2 7h4l6-5v16l-6-5H2z" fill="#e06a4a" /><path d="M15 6v8M18 6v8" stroke="#7a2410" strokeWidth="1.600" /></>,
  <path d="M3 17C3 8 9 3 17 3M7 17c0-6 4-10 10-10M11 17c0-4 2-6 6-6M14 17c0-2 1-3 3-3" stroke="#ddd" strokeWidth="1.400" />,
  <><path d="M1 1h18v18H1z" fill="#eee" /><path d="M5 2v16M17 2 6 10l11 9" stroke="#d8262c" strokeWidth="4" /></>,
  <><path d="M6 6h12v9H6zM18 9h2v3" stroke="#fff" strokeWidth="1.400" /><path d="M8 8h8v5H8z" fill="#fff" /><path d="M1 3h6v4H1zM4 7v8" stroke="#fff" strokeWidth="1.300" /></>,
  <><path d="M2 7h3l5-4v14l-5-4H2z" stroke="#fff" strokeWidth="1.400" /><path d="m13 8 5 5m0-5-5 5" stroke="#fff" strokeWidth="1.400" /></>,
];

function Taskbar() {
  return (
    <footer className="flex h-10 bg-black text-[12px] text-white">
      {apps.map(a => (
        <button
          key={a.name}
          aria-label={a.name}
          className={`flex w-[49px] items-center justify-center ${a.state === 'active' ? 'bg-[#333]' : ''}`}
        >
          <span className={`flex h-10 w-10 items-center justify-center border-b-2 pt-px ${a.state ? 'border-[#76b9ed]' : 'border-transparent'}`}>{a.icon}</span>
        </button>
      ))}
      <div className="ml-auto flex shrink-0 items-center">
        {tray.map((t, i) => (
          <button key={i} aria-label={`Значок ${i + 1}`} className="flex h-10 w-6 items-center justify-center"><Svg s={16}>{t}</Svg></button>
        ))}
        <button className="w-[38px] text-center">ENG</button>
        <button className="w-[58px] whitespace-nowrap text-center leading-[18px]">17:06<br />14.05.2018</button>
        <button aria-label="Уведомления" className="flex w-[54px] justify-center"><Svg s={18}><path d="M2 2h16v13h-5v3l-3-3H2z" stroke="#fff" strokeWidth="1.500" /></Svg></button>
        <span className="h-10 w-[5px] border-l border-[#555]" />
      </div>
    </footer>
  );
}

export default function App() {
  return (
    <div className="relative flex min-h-screen flex-col overflow-hidden bg-[#5b5b5b] font-['Open_Sans','Noto_Sans',sans-serif] text-[11px]">
      <TitleBar />
      <Ribbon />
      <FileTabs />
      <div className="flex flex-1">
        <Properties />
        <Canvas />
        <RightTools />
      </div>
      <StatusBar />
      <Taskbar />
      {/* hand-drawn marker over the command options */}
      <svg width="340" height="170" viewBox="1020 912 340 170" className="pointer-events-none absolute bottom-[-2px] left-[1020px]" fill="none" aria-hidden="true">
        <path
          d="M1308 923Q1321 932 1328 942Q1338 954 1341 962Q1343 976 1340 988Q1335 1005 1325 1017Q1313 1032 1304 1038Q1292 1046 1280 1051Q1266 1057 1252 1067Q1230 1075 1208 1078Q1180 1082 1153 1079Q1135 1076 1122 1072Q1106 1067 1094 1062Q1075 1055 1065 1049L1055 1039L1039 1028Q1031 1023 1030 1019Q1030 1014 1034 1009L1046 997L1060 983L1073 970Q1080 963 1090 958L1101 953Q1113 949 1124 944Q1142 939 1156 939H1191Q1212 939 1225 941L1242 948L1268 960Q1276 969 1284 977Q1289 981 1288 984"
          stroke="#ef2f30"
          strokeOpacity=".92"
          strokeWidth="4"
          strokeLinecap="round"
        />
      </svg>
    </div>
  );
}
